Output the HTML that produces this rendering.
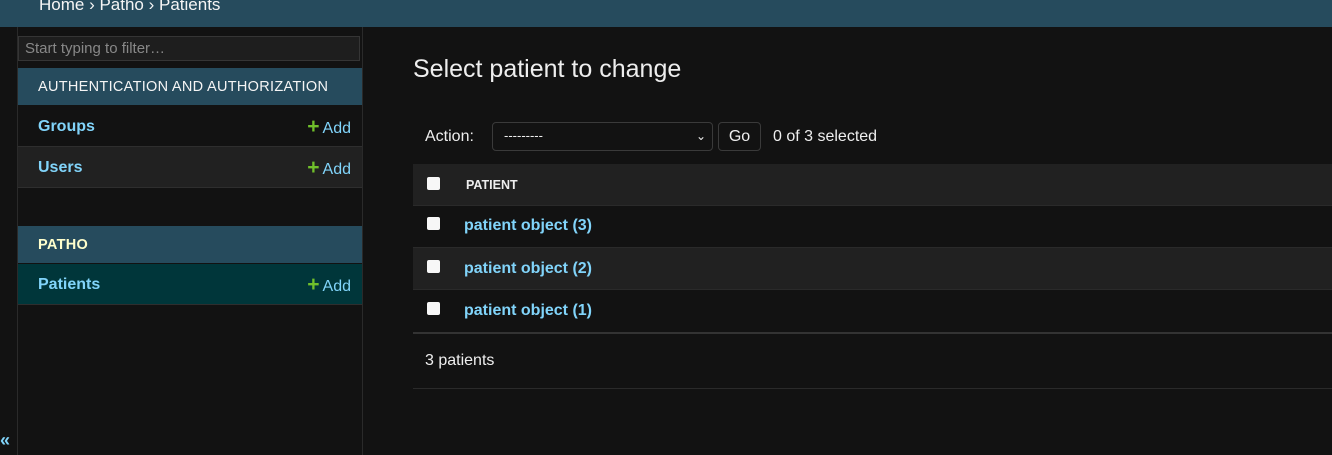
<!DOCTYPE html><html><head><style>
body{margin:0;width:1332px;height:455px;background:#121212;font-family:"Liberation Sans",sans-serif;color:#f5dd5d;overflow:hidden;position:relative}
.a{position:absolute}
.hdr{left:0;top:0;width:1332px;height:27px;background:#264b5d}
.crumb{left:39px;top:-5px;font-size:17px;color:#f5f5f5;white-space:nowrap}
.side{left:17px;top:27px;width:344px;height:428px;border-left:1px solid #2a2a2a;border-right:1px solid #2a2a2a}
.filter{left:18px;top:36px;width:342px;height:25px;border:1px solid #353535;background:#1e1e1e;color:#888;font-size:15px;box-sizing:border-box;padding:3px 6px;line-height:17px}
.cap{left:18px;width:344px;height:37px;background:#264b5d;color:#f5f5f5;font-size:14.5px;line-height:38px;padding-left:20px;box-sizing:border-box;letter-spacing:.3px}
.row{left:18px;width:344px;height:41px;border-bottom:1px solid #2e2e2e;box-sizing:border-box;font-size:16px;line-height:41px;color:#81d4fa}
.row b{position:absolute;left:20px}
.row span{position:absolute;right:11px;color:#81d4fa}
.row span i{font-style:normal;color:#70bf2b;font-weight:bold;font-size:21px;margin-right:3px}
.lbl{color:#eee;font-size:16px}
.cb{width:13px;height:13px;background:#f7f7f7;border-radius:2px}
.tr{left:413px;width:919px;height:42px;border-bottom:1px solid #2a2a2a;box-sizing:border-box}
.lnk{color:#81d4fa;font-weight:bold;font-size:16px;left:464px}
</style></head><body>
<div class="a hdr"></div>
<div class="a crumb">Home › Patho › Patients</div>
<div class="a side"></div>
<div class="a filter">Start typing to filter…</div>
<div class="a cap" style="top:68px">AUTHENTICATION AND AUTHORIZATION</div>
<div class="a row" style="top:106px;background:#121212"><b>Groups</b><span><i>+</i>Add</span></div>
<div class="a row" style="top:147px;background:#212121"><b>Users</b><span><i>+</i>Add</span></div>
<div class="a cap" style="top:226px;font-weight:bold;color:#ffffcc">PATHO</div>
<div class="a row" style="top:264px;background:#00363a"><b>Patients</b><span><i>+</i>Add</span></div>
<div class="a" style="left:0;top:430px;color:#81d4fa;font-size:18px;font-weight:bold">«</div>
<div class="a" style="left:413px;top:55px;font-size:25px;color:#eee;font-weight:300">Select patient to change</div>
<div class="a lbl" style="left:425px;top:128px">Action:</div>
<div class="a" style="left:492px;top:122px;width:221px;height:29px;border:1px solid #3a3a3a;border-radius:4px;box-sizing:border-box;background:#121212;color:#eee;font-size:13px;line-height:26px;padding-left:11px">---------<span style="position:absolute;right:6px;top:0;font-size:12px">&#8964;</span></div>
<div class="a" style="left:718px;top:122px;width:43px;height:29px;border:1px solid #3a3a3a;border-radius:4px;box-sizing:border-box;color:#eee;font-size:16px;line-height:27px;text-align:center">Go</div>
<div class="a lbl" style="left:773px;top:128px">0 of 3 selected</div>
<div class="a tr" style="top:164px;background:#212121"></div>
<div class="a cb" style="left:427px;top:177px"></div>
<div class="a" style="left:466px;top:178px;font-size:12.5px;font-weight:bold;color:#eee">PATIENT</div>
<div class="a tr" style="top:206px"></div>
<div class="a cb" style="left:427px;top:217px"></div><div class="a lnk" style="top:217px">patient object (3)</div>
<div class="a tr" style="top:248px;background:#212121"></div>
<div class="a cb" style="left:427px;top:260px"></div><div class="a lnk" style="top:260px">patient object (2)</div>
<div class="a tr" style="top:290px;border-bottom:2px solid #333;height:44px"></div>
<div class="a cb" style="left:427px;top:302px"></div><div class="a lnk" style="top:302px">patient object (1)</div>
<div class="a lbl" style="left:425px;top:352px">3 patients</div>
<div class="a" style="left:413px;top:388px;width:919px;border-top:1px solid #2a2a2a"></div>
</body></html>
